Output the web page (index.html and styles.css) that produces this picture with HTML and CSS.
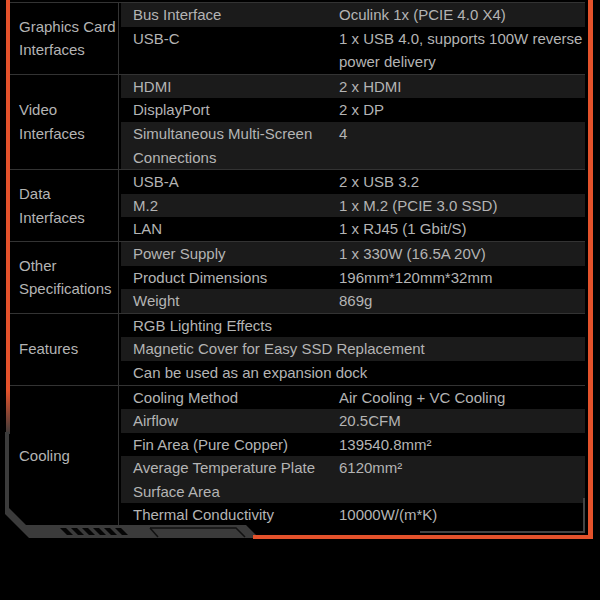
FILE: index.html
```html
<!DOCTYPE html>
<html>
<head>
<meta charset="utf-8">
<link rel="stylesheet" href="styles.css">
</head>
<body>
<div class="page">
  <div class="spec">
    <div class="group">
      <div class="cat">Graphics Card<br>Interfaces</div>
      <div class="rows">
        <div class="row g"><span>Bus Interface</span><span>Oculink 1x (PCIE 4.0 X4)</span></div>
        <div class="row"><span>USB-C</span><span>1 x USB 4.0, supports 100W reverse<br>power delivery</span></div>
      </div>
    </div>
    <div class="group">
      <div class="cat">Video<br>Interfaces</div>
      <div class="rows">
        <div class="row g"><span>HDMI</span><span>2 x HDMI</span></div>
        <div class="row"><span>DisplayPort</span><span>2 x DP</span></div>
        <div class="row g"><span>Simultaneous Multi-Screen<br>Connections</span><span>4</span></div>
      </div>
    </div>
    <div class="group">
      <div class="cat">Data<br>Interfaces</div>
      <div class="rows">
        <div class="row"><span>USB-A</span><span>2 x USB 3.2</span></div>
        <div class="row g"><span>M.2</span><span>1 x M.2 (PCIE 3.0 SSD)</span></div>
        <div class="row"><span>LAN</span><span>1 x RJ45 (1 Gbit/S)</span></div>
      </div>
    </div>
    <div class="group">
      <div class="cat">Other<br>Specifications</div>
      <div class="rows">
        <div class="row g"><span>Power Supply</span><span>1 x 330W (16.5A 20V)</span></div>
        <div class="row"><span>Product Dimensions</span><span>196mm*120mm*32mm</span></div>
        <div class="row g"><span>Weight</span><span>869g</span></div>
      </div>
    </div>
    <div class="group">
      <div class="cat">Features</div>
      <div class="rows">
        <div class="row wide"><span>RGB Lighting Effects</span></div>
        <div class="row wide g"><span>Magnetic Cover for Easy SSD Replacement</span></div>
        <div class="row wide"><span>Can be used as an expansion dock</span></div>
      </div>
    </div>
    <div class="group">
      <div class="cat">Cooling</div>
      <div class="rows">
        <div class="row"><span>Cooling Method</span><span>Air Cooling + VC Cooling</span></div>
        <div class="row g"><span>Airflow</span><span>20.5CFM</span></div>
        <div class="row"><span>Fin Area (Pure Copper)</span><span>139540.8mm²</span></div>
        <div class="row g"><span>Average Temperature Plate<br>Surface Area</span><span>6120mm²</span></div>
        <div class="row"><span>Thermal Conductivity</span><span>10000W/(m*K)</span></div>
      </div>
    </div>
  </div>
  <svg class="frame" width="600" height="600" viewBox="0 0 600 600">
    <defs>
      <linearGradient id="lg" x1="0" y1="0" x2="0" y2="1">
        <stop offset="0.9" stop-color="#e4522b"/>
        <stop offset="1" stop-color="#3a3a3a"/>
      </linearGradient>
    </defs>
    <rect x="6" y="0" width="4" height="434" fill="url(#lg)"/>
    <polygon points="5,432 9,432 9,508 26,525 246,525 256,535 256,538 29,538 5,514" fill="#3b3b3b"/>
    <g fill="#050505">
      <polygon points="60,528 66,528 73,535 67,535"/>
      <polygon points="71,528 77,528 84,535 78,535"/>
      <polygon points="82,528 88,528 95,535 89,535"/>
      <polygon points="93,528 99,528 106,535 100,535"/>
      <polygon points="104,528 110,528 117,535 111,535"/>
      <polygon points="115,528 121,528 128,535 122,535"/>
    </g>
    <polyline points="150,528 236,528 245,537" fill="none" stroke="#111" stroke-width="1.5"/>
    <line x1="150" y1="528" x2="158" y2="537" stroke="#111" stroke-width="1.5"/>
    <rect x="420" y="531" width="165" height="2" fill="#444"/>
    <rect x="583" y="498" width="2" height="35" fill="#444"/>
    <rect x="588" y="0" width="5" height="539" fill="#e4522b"/>
    <rect x="253" y="535" width="340" height="4" fill="#e4522b"/>
  </svg>
</div>
</body>
</html>
```
FILE: styles.css
```css
html, body {
  margin: 0;
  padding: 0;
  background: #000;
}
.page {
  position: relative;
  width: 600px;
  height: 600px;
  overflow: hidden;
  background: #000;
}
.spec {
  margin-left: 10px;
  padding-top: 2px;
  width: 575px;
  font-family: "Liberation Sans", Arial, sans-serif;
  font-size: 15px;
  color: #b4b4b4;
  line-height: 23.6px;
}
.group {
  display: flex;
  border-top: 1px solid #333;
}
.cat {
  width: 99px;
  padding-left: 9px;
  flex: none;
  display: flex;
  align-items: center;
  border-right: 1px solid #333;
  white-space: nowrap;
}
.rows {
  flex: 1;
  padding-left: 2px;
}
.row {
  display: grid;
  grid-template-columns: 206px 1fr;
  padding-left: 12px;
  white-space: nowrap;
}
.row.wide {
  grid-template-columns: 1fr;
}
.row.g {
  background: #1b1b1b;
}
.frame {
  position: absolute;
  left: 0;
  top: 0;
  pointer-events: none;
}
```
